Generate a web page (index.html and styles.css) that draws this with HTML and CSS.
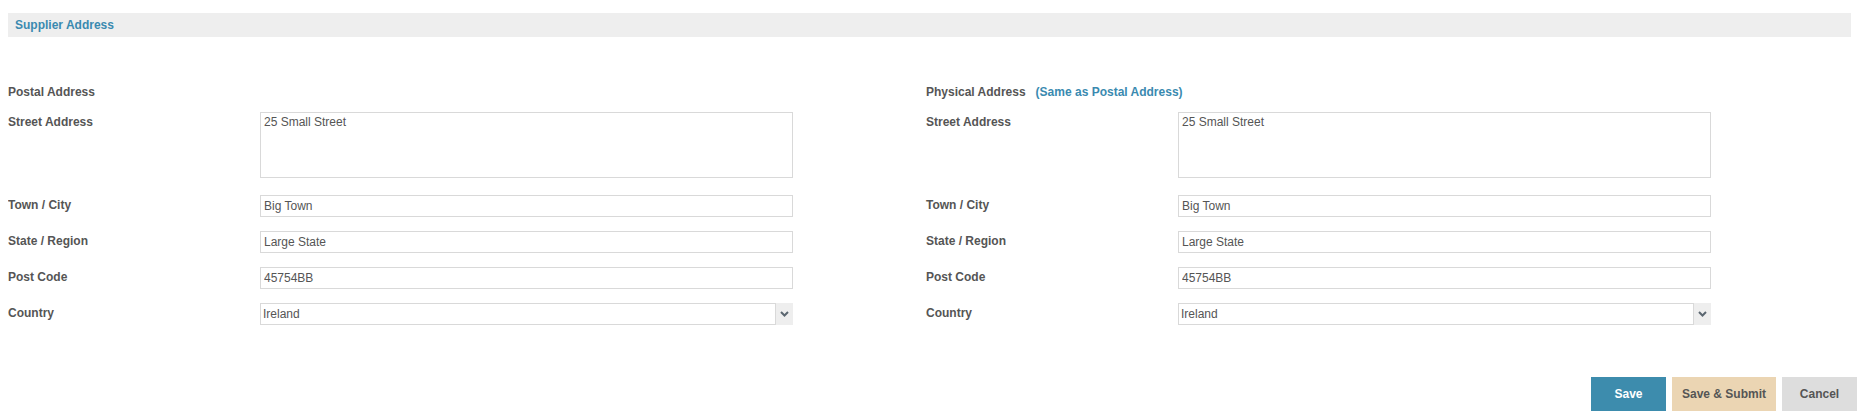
FILE: index.html
```html
<!DOCTYPE html>
<html>
<head>
<meta charset="utf-8">
<title>Supplier Address</title>
<link rel="stylesheet" href="styles.css">
</head>
<body>
<div class="section-header">Supplier Address</div>
<div class="columns">
  <div class="col">
    <div class="col-title">Postal Address</div>
    <div class="row row-area">
      <label class="lbl">Street Address</label>
      <textarea class="field area">25 Small Street</textarea>
    </div>
    <div class="row">
      <label class="lbl">Town / City</label>
      <input class="field" type="text" value="Big Town">
    </div>
    <div class="row">
      <label class="lbl">State / Region</label>
      <input class="field" type="text" value="Large State">
    </div>
    <div class="row">
      <label class="lbl">Post Code</label>
      <input class="field" type="text" value="45754BB">
    </div>
    <div class="row">
      <label class="lbl">Country</label>
      <div class="select-wrap">
        <select class="sel"><option>Ireland</option></select>
        <span class="sel-arrow"><svg width="9" height="6" viewBox="0 0 9 6"><polyline points="1,1 4.5,4.5 8,1" fill="none" stroke="#5b6670" stroke-width="2"/></svg></span>
      </div>
    </div>
  </div>
  <div class="col">
    <div class="col-title">Physical Address<span class="same">(Same as Postal Address)</span></div>
    <div class="row row-area">
      <label class="lbl">Street Address</label>
      <textarea class="field area">25 Small Street</textarea>
    </div>
    <div class="row">
      <label class="lbl">Town / City</label>
      <input class="field" type="text" value="Big Town">
    </div>
    <div class="row">
      <label class="lbl">State / Region</label>
      <input class="field" type="text" value="Large State">
    </div>
    <div class="row">
      <label class="lbl">Post Code</label>
      <input class="field" type="text" value="45754BB">
    </div>
    <div class="row">
      <label class="lbl">Country</label>
      <div class="select-wrap">
        <select class="sel"><option>Ireland</option></select>
        <span class="sel-arrow"><svg width="9" height="6" viewBox="0 0 9 6"><polyline points="1,1 4.5,4.5 8,1" fill="none" stroke="#5b6670" stroke-width="2"/></svg></span>
      </div>
    </div>
  </div>
</div>
<div class="actions">
  <button class="btn btn-save">Save</button>
  <button class="btn btn-submit">Save &amp; Submit</button>
  <button class="btn btn-cancel">Cancel</button>
</div>
</body>
</html>
```
FILE: styles.css
```css
html, body {
  background: #fff;
}
body {
  margin: 8px;
  font-family: "Liberation Sans", Arial, sans-serif;
  font-size: 12px;
  color: #555;
}
.section-header {
  margin-top: 5px;
  margin-right: 6px;
  height: 24px;
  line-height: 24px;
  padding-left: 7px;
  background: #eeeeee;
  color: #3a8ab0;
  font-weight: bold;
}
.columns {
  display: grid;
  grid-template-columns: 918px 1fr;
  margin-top: 48px;
}
.col {
  display: flex;
  flex-direction: column;
  gap: 14px;
}
.col-title {
  font-weight: bold;
  line-height: 14px;
  margin-bottom: -1px;
}
.same {
  color: #3a8ab0;
  margin-left: 10px;
}
.row {
  display: grid;
  grid-template-columns: 252px 533px;
  align-items: start;
}
.row-area {
  margin-bottom: 3px;
}
.lbl {
  font-weight: bold;
  line-height: 14px;
  padding-top: 3px;
}
.field {
  box-sizing: border-box;
  width: 533px;
  height: 22px;
  margin: 0;
  border: 1px solid #d9d9d9;
  padding: 0 3px;
  font-family: "Liberation Sans", Arial, sans-serif;
  font-size: 12px;
  color: #555;
  background: #fff;
  outline: none;
}
.area {
  height: 66px;
  padding: 2px 3px;
  resize: none;
  line-height: 14px;
  display: block;
}
.select-wrap {
  display: flex;
  width: 533px;
  height: 22px;
}
.sel {
  box-sizing: border-box;
  flex: 1;
  height: 22px;
  margin: 0;
  border: 1px solid #d9d9d9;
  padding: 0 2px;
  appearance: none;
  -webkit-appearance: none;
  background: #fff;
  font-family: "Liberation Sans", Arial, sans-serif;
  font-size: 12px;
  color: #555;
  border-radius: 0;
  outline: none;
}
.sel-arrow {
  width: 17px;
  height: 22px;
  background: #eeeeee;
  display: flex;
  align-items: center;
  justify-content: center;
}
.actions {
  display: flex;
  justify-content: flex-end;
  gap: 6px;
  margin-top: 52px;
}
.btn {
  height: 34px;
  border: none;
  margin: 0;
  padding: 0;
  font-family: "Liberation Sans", Arial, sans-serif;
  font-size: 12px;
  font-weight: bold;
  color: #555;
}
.btn-save {
  width: 75px;
  background: #3d8cad;
  color: #fff;
}
.btn-submit {
  width: 104px;
  background: #ebd5b3;
}
.btn-cancel {
  width: 75px;
  background: #dddddd;
}
```
